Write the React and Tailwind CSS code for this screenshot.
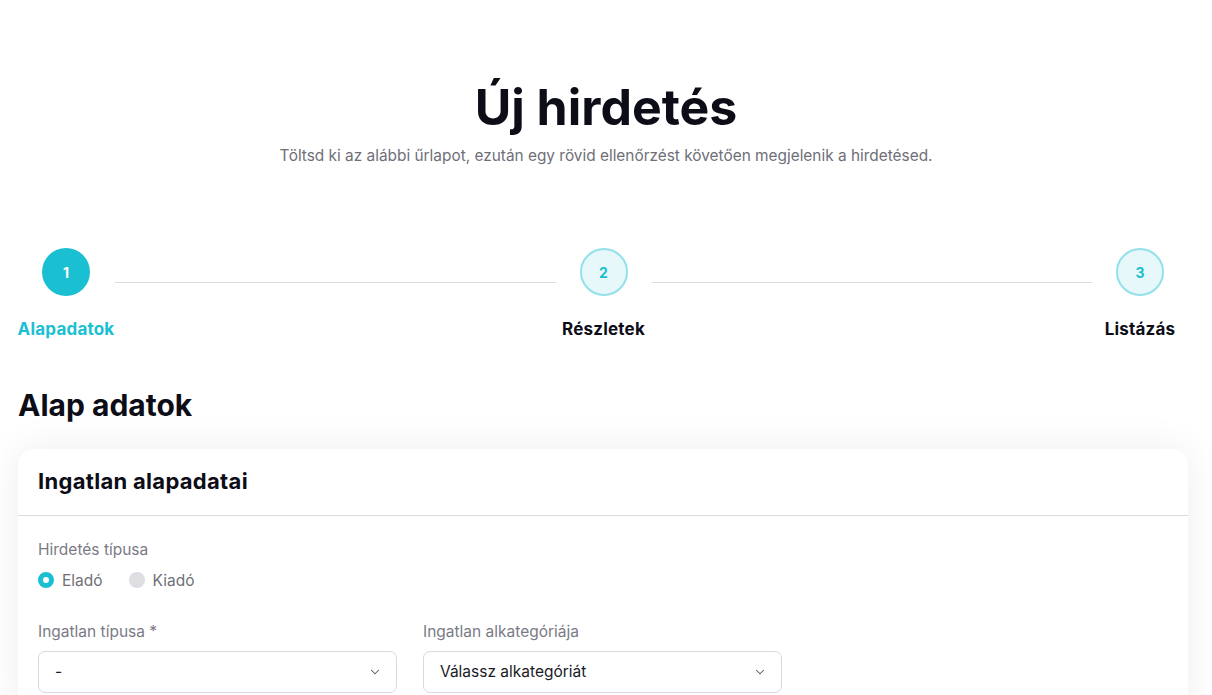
import React from "react";

const head = { fontFamily: "Inter, 'Noto Sans', sans-serif" };

function Chevron() {
  return (
    <svg width="14" height="14" viewBox="0 0 24 24" fill="none" stroke="#55555f" strokeWidth="1.8" strokeLinecap="round" strokeLinejoin="round">
      <path d="M6 9l6 6 6-6" />
    </svg>
  );
}

function Step({ n, label, active }) {
  return (
    <div className="w-24 flex flex-col items-center shrink-0">
      {active ? (
        <div className="w-12 h-12 rounded-full bg-[#1abfd1] flex items-center justify-center text-white text-[14px] font-bold" style={head}>
          {n}
        </div>
      ) : (
        <div className="w-12 h-12 rounded-full bg-[#e7f8fb] border-2 border-[#92e0ea] flex items-center justify-center text-[#1abfd1] text-[14px] font-bold" style={head}>
          {n}
        </div>
      )}
      <div className={`mt-[21px] text-[17px] tracking-[0.2px] font-bold whitespace-nowrap ${active ? "text-[#1abfd1]" : "text-[#0d0d17]"}`} style={head}>
        {label}
      </div>
    </div>
  );
}

function Select({ label, value }) {
  return (
    <div className="w-[359px]">
      <div className="text-[15.5px] text-[#7a7a85] leading-5">{label}</div>
      <div className="mt-[9px] h-[42px] border border-[#d8d8de] rounded-[7px] flex items-center justify-between pl-4 pr-[14px]">
        <span className="text-[15.5px] text-[#1a1a24]">{value}</span>
        <Chevron />
      </div>
    </div>
  );
}

export default function App() {
  return (
    <div className="w-[1212px] h-[695px] overflow-hidden bg-white" style={{ fontFamily: "Inter, 'Noto Sans', sans-serif" }}>
      <div className="pt-[78px] flex flex-col items-center">
        <h1 className="text-[50px] leading-[58px] font-bold text-[#0d0d17]" style={head}>Új hirdetés</h1>
        <p className="mt-[10px] text-[15.4px] text-[#6f6f78] leading-5">
          Töltsd ki az alábbi űrlapot, ezután egy rövid ellenőrzést követően megjelenik a hirdetésed.
        </p>
      </div>

      <div className="ml-[18px] w-[1170px] mt-[82px] flex items-start">
        <Step n="1" label="Alapadatok" active />
        <div className="flex-1 h-px bg-[#dcdce0] mt-[34px] ml-px" />
        <Step n="2" label="Részletek" />
        <div className="flex-1 h-px bg-[#dcdce0] mt-[34px]" />
        <Step n="3" label="Listázás" />
      </div>

      <h2 className="ml-[18px] mt-[44px] text-[30px] leading-9 font-bold text-[#0d0d17]" style={head}>Alap adatok</h2>

      <div className="ml-[18px] mt-[26px] w-[1170px] bg-white rounded-[16px] shadow-[0_0_40px_rgba(20,20,40,0.07)]">
        <div className="h-[67px] px-5 flex items-center border-b border-[#dcdce0]">
          <h3 className="text-[22px] tracking-[0.3px] font-bold text-[#0d0d17]" style={head}>Ingatlan alapadatai</h3>
        </div>
        <div className="px-5 pt-[24px] pb-6">
          <div className="text-[15.5px] text-[#7a7a85] leading-5">Hirdetés típusa</div>
          <div className="mt-[9px] flex items-center gap-[26px]">
            <label className="flex items-center gap-2">
              <span className="w-4 h-4 rounded-full border-[5px] border-[#1abfd1] bg-white" />
              <span className="text-[15.5px] text-[#6f6f78]">Eladó</span>
            </label>
            <label className="flex items-center gap-2">
              <span className="w-4 h-4 rounded-full bg-[#dddde2]" />
              <span className="text-[15.5px] text-[#6f6f78]">Kiadó</span>
            </label>
          </div>
          <div className="mt-[30px] flex gap-[26px]">
            <Select label="Ingatlan típusa *" value="-" />
            <Select label="Ingatlan alkategóriája" value="Válassz alkategóriát" />
          </div>
        </div>
      </div>
    </div>
  );
}
